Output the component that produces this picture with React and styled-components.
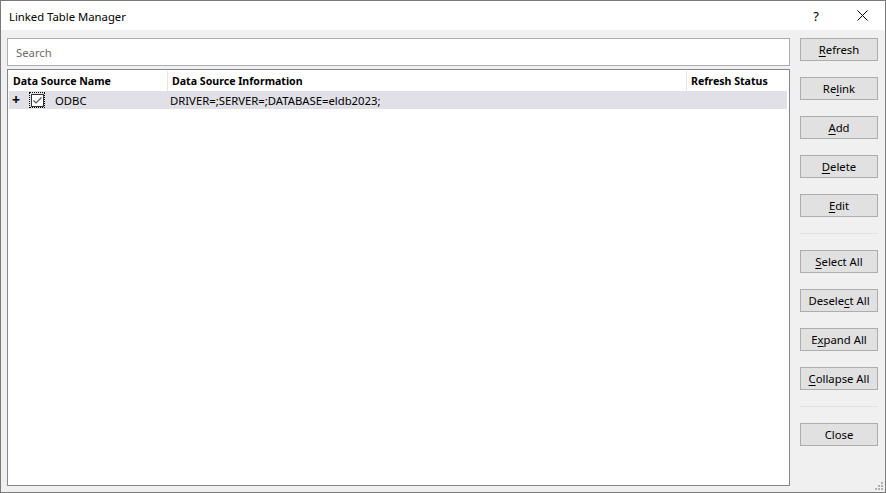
import React from 'react';
import styled, { createGlobalStyle } from 'styled-components';

const GlobalStyle = createGlobalStyle`
    html, body {
        margin: 0;
        padding: 0;
        background: #ffffff;
    }
    body {
        font-family: 'Segoe UI', 'Noto Sans', sans-serif;
        font-size: 11.3px;
        color: #000000;
    }
`;

const Window = styled.div`
    position: relative;
    box-sizing: border-box;
    width: 886px;
    height: 493px;
    border: 1px solid #7a7a7a;
    background: #f0f0f0;
    display: flex;
    flex-direction: column;
`;

const TitleBar = styled.div`
    height: 29px;
    background: #ffffff;
    display: flex;
    align-items: center;
    padding-left: 8px;
`;

const Title = styled.div`
    flex: 1;
    font-size: 11.3px;
    padding-top: 1px;
`;

const TitleButton = styled.div`
    width: 46px;
    height: 29px;
    display: flex;
    align-items: center;
    justify-content: center;
    font-size: 13px;
    color: #000;
`;

const Body = styled.div`
    flex: 1;
    display: flex;
    gap: 10px;
    padding: 7px 7px 6px 6px;
    min-height: 0;
`;

const Main = styled.div`
    flex: 1;
    display: flex;
    flex-direction: column;
    gap: 3px;
    min-width: 0;
    padding-top: 1px;
`;

const Search = styled.input`
    box-sizing: border-box;
    height: 28px;
    border: 1px solid #adadad;
    background: #ffffff;
    padding: 0 8px;
    font-family: inherit;
    font-size: 11.3px;
    outline: none;
    &::placeholder {
        color: #6d6d6d;
    }
`;

const List = styled.div`
    flex: 1;
    box-sizing: border-box;
    border: 1px solid #828790;
    background: #ffffff;
    padding: 1px;
    display: flex;
    flex-direction: column;
`;

const Row = styled.div`
    display: grid;
    grid-template-columns: 159px 519px 1fr;
    height: ${p => (p.header ? '20px' : '18px')};
    align-items: stretch;
    background: ${p => (p.selected ? '#e0e0e6' : '#ffffff')};
    margin-right: ${p => (p.header ? '0' : '1px')};
`;

const HeadCell = styled.div`
    display: flex;
    align-items: center;
    padding-left: 4px;
    font-weight: bold;
    font-size: 10.6px;
    border-right: ${p => (p.last ? 'none' : '1px solid #e5e5e5')};
`;

const Cell = styled.div`
    display: flex;
    align-items: center;
    padding-left: ${p => p.pad || 2}px;
`;

const Plus = styled.span`
    width: 10px;
    font-weight: bold;
    font-size: 14px;
    line-height: 1;
    margin-right: 8px;
    display: flex;
    justify-content: center;
`;

const Focus = styled.span`
    box-sizing: border-box;
    width: 16px;
    height: 16px;
    border: 1px dotted #000;
    display: flex;
    align-items: center;
    justify-content: center;
    margin-right: 10px;
`;

const Box = styled.span`
    box-sizing: border-box;
    width: 13px;
    height: 13px;
    border: 1px solid #333;
    background: #fff;
    display: flex;
    align-items: center;
    justify-content: center;
`;

const Side = styled.div`
    width: 78px;
    display: flex;
    flex-direction: column;
    padding-top: 1px;
`;

const Button = styled.div`
    box-sizing: border-box;
    height: 23px;
    border: 1px solid #adadad;
    background: #e1e1e1;
    display: flex;
    align-items: center;
    justify-content: center;
    margin-bottom: 16px;
    & u {
        text-decoration: underline;
        text-underline-offset: 2px;
    }
`;

const Separator = styled.div`
    height: 1px;
    background: #e3e3e3;
    margin-bottom: 16px;
`;

const Grip = styled.svg`
    position: absolute;
    right: 2px;
    bottom: 2px;
`;

const Btn = ({ label, k }) => {
    if (k === undefined) return <Button>{label}</Button>;
    return (
        <Button>
            {label.slice(0, k)}
            <u>{label[k]}</u>
            {label.slice(k + 1)}
        </Button>
    );
};

export default function App() {
    return (
        <>
            <GlobalStyle />
            <Window>
                <TitleBar>
                    <Title>Linked Table Manager</Title>
                    <TitleButton>?</TitleButton>
                    <TitleButton>
                        <svg width="11" height="11" viewBox="0 0 11 11">
                            <path d="M0.5 0.5 L10.5 10.5 M10.5 0.5 L0.5 10.5" stroke="#000" strokeWidth="1" />
                        </svg>
                    </TitleButton>
                </TitleBar>
                <Body>
                    <Main>
                        <Search placeholder="Search" />
                        <List>
                            <Row header>
                                <HeadCell>Data Source Name</HeadCell>
                                <HeadCell>Data Source Information</HeadCell>
                                <HeadCell last>Refresh Status</HeadCell>
                            </Row>
                            <Row selected>
                                <Cell pad={0}>
                                    <Plus>+</Plus>
                                    <Focus>
                                        <Box>
                                            <svg width="11" height="11" viewBox="0 0 11 11">
                                                <path d="M1.5 5.5 L4 8 L9.5 2.5" stroke="#555" strokeWidth="1.2" fill="none" />
                                            </svg>
                                        </Box>
                                    </Focus>
                                    ODBC
                                </Cell>
                                <Cell>DRIVER=;SERVER=;DATABASE=eldb2023;</Cell>
                                <Cell />
                            </Row>
                        </List>
                    </Main>
                    <Side>
                        <Btn label="Refresh" k={0} />
                        <Btn label="Relink" k={2} />
                        <Btn label="Add" k={0} />
                        <Btn label="Delete" k={0} />
                        <Btn label="Edit" k={0} />
                        <Separator />
                        <Btn label="Select All" k={0} />
                        <Btn label="Deselect All" k={6} />
                        <Btn label="Expand All" k={1} />
                        <Btn label="Collapse All" k={0} />
                        <Separator />
                        <Btn label="Close" />
                    </Side>
                </Body>
                <Grip width="8" height="8" viewBox="0 0 8 8">
                    <rect x="6" y="0" width="2" height="2" fill="#b0b0b0" />
                    <rect x="3" y="3" width="2" height="2" fill="#b0b0b0" />
                    <rect x="6" y="3" width="2" height="2" fill="#b0b0b0" />
                    <rect x="0" y="6" width="2" height="2" fill="#b0b0b0" />
                    <rect x="3" y="6" width="2" height="2" fill="#b0b0b0" />
                    <rect x="6" y="6" width="2" height="2" fill="#b0b0b0" />
                </Grip>
            </Window>
        </>
    );
}
